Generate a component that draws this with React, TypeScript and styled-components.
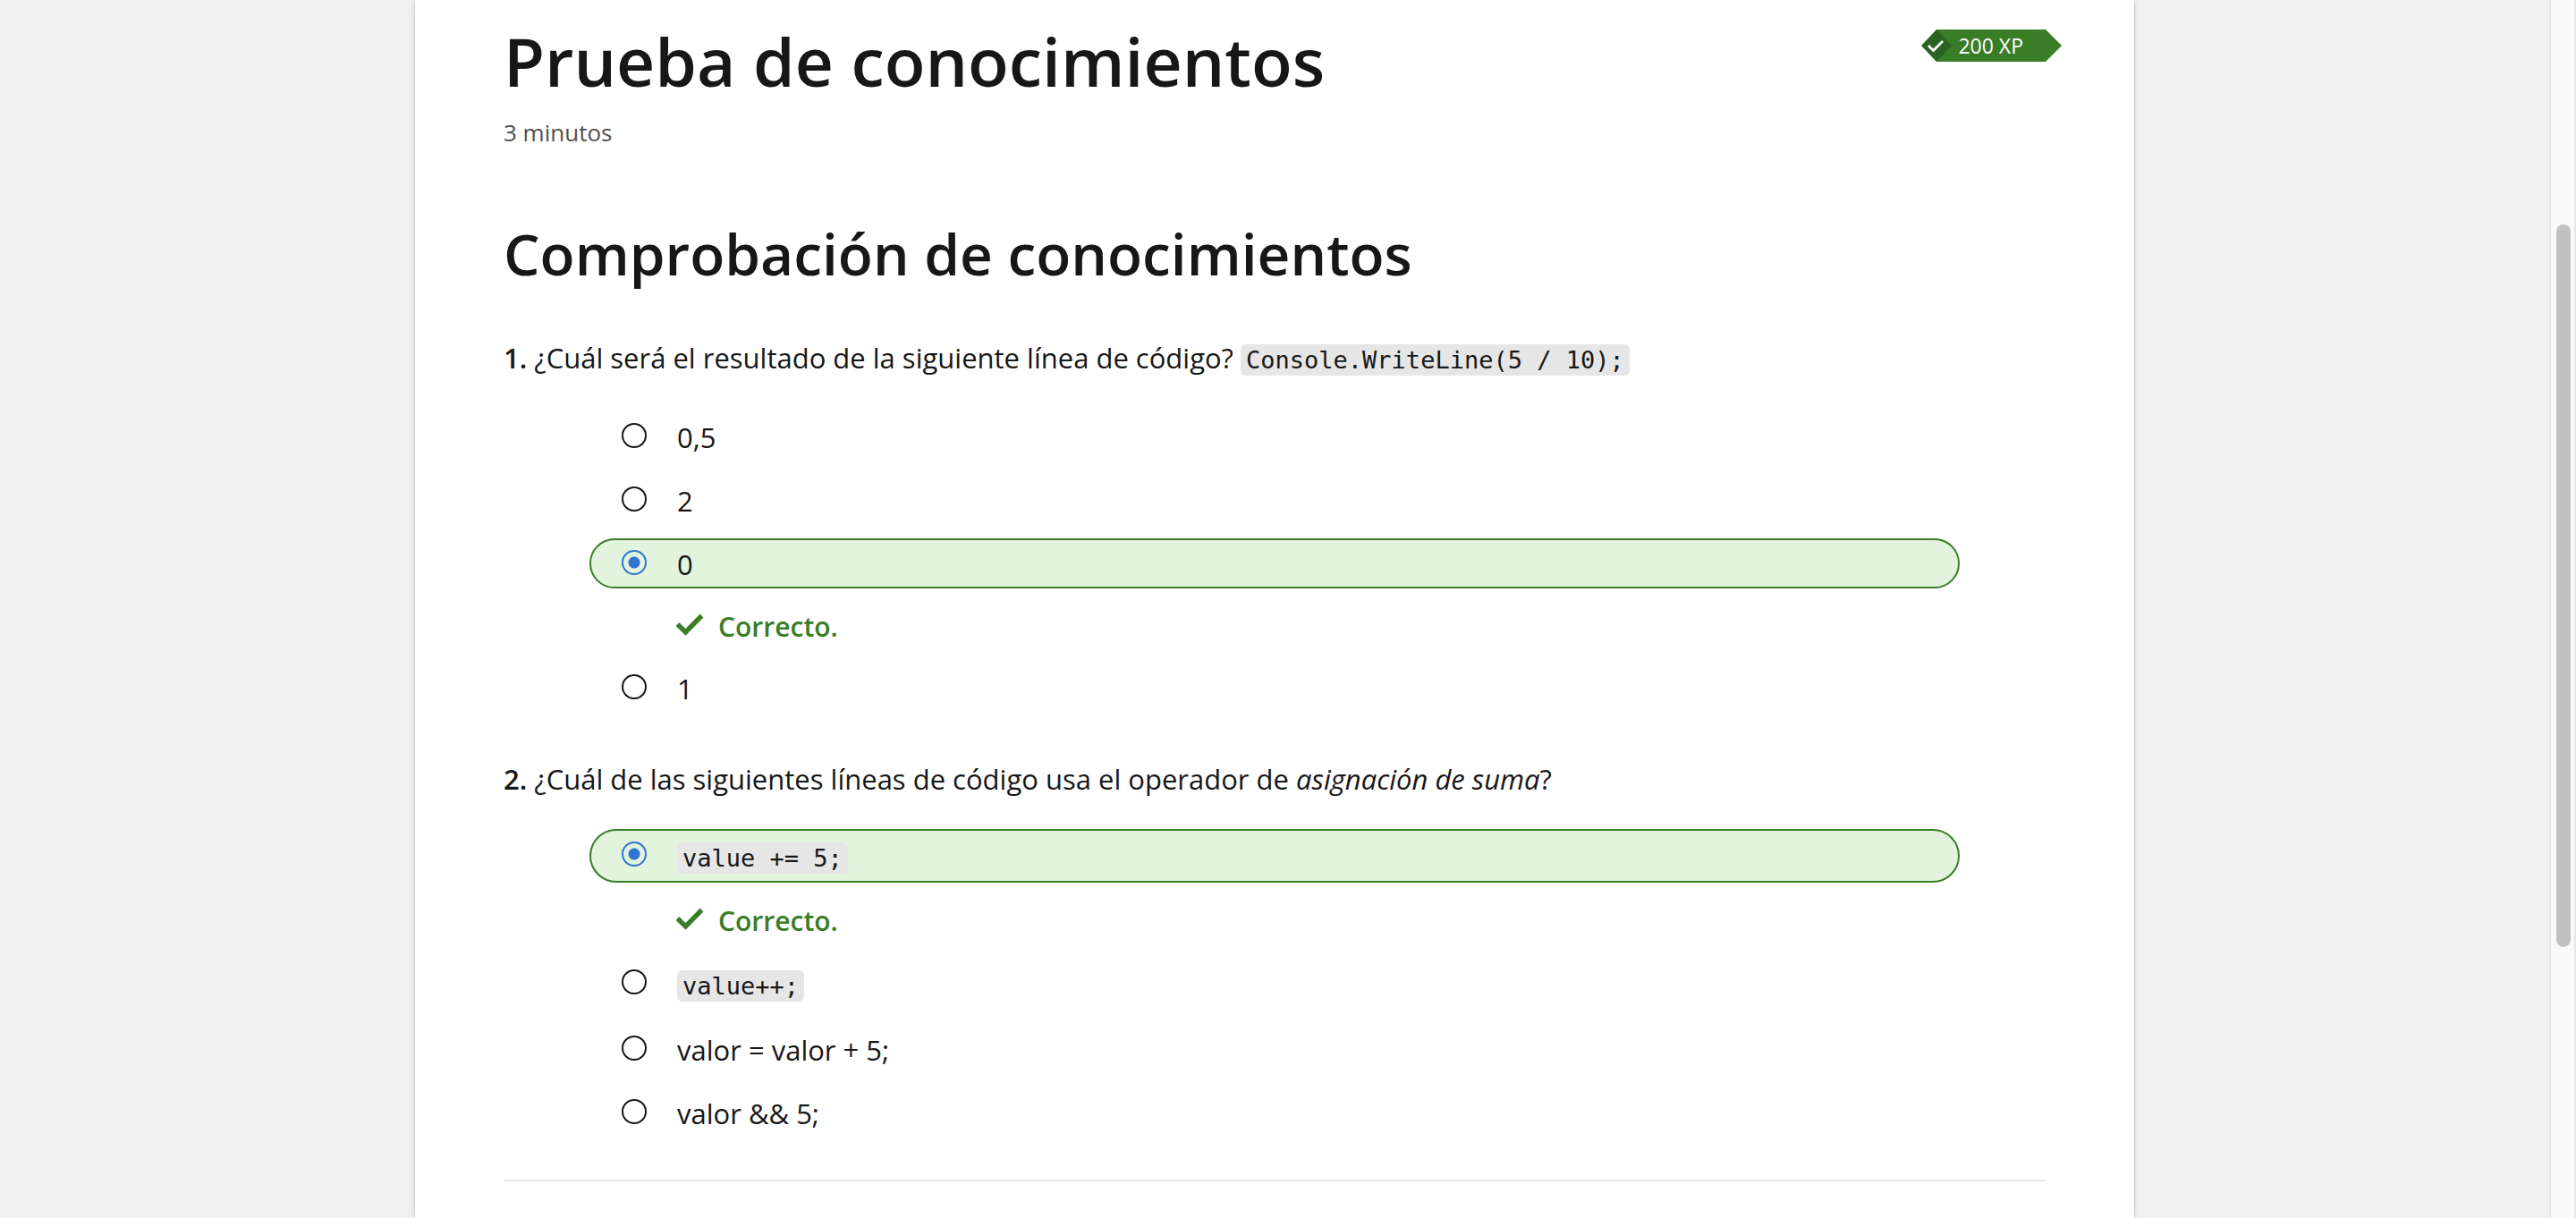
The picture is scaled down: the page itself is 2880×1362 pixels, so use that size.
import React, { useState } from "react";
import styled, { createGlobalStyle } from "styled-components";

const GlobalStyle = createGlobalStyle`
  * { box-sizing: border-box; }
  body {
    margin: 0;
    background: #f1f1f1;
    color: #171717;
    font-family: "Open Sans", "Noto Sans", sans-serif;
    font-size: 31px;
    line-height: 48px;
  }
`;

const Viewport = styled.div`
  display: flex;
  height: 100vh;
  overflow: hidden;
`;

const Content = styled.main`
  flex: 1;
  display: flex;
  justify-content: center;
  align-items: stretch;
`;

const Card = styled.article`
  width: 100%;
  max-width: 1922px;
  padding: 14px 99px 40px;
  background: #fff;
  box-shadow: 0 0 2px rgba(0, 0, 0, 0.22), 0 2px 8px rgba(0, 0, 0, 0.13);
`;

const Header = styled.header`
  display: flex;
  justify-content: space-between;
  align-items: flex-start;
`;

const Title = styled.h1`
  margin: 0;
  font-size: 75px;
  font-weight: 600;
  line-height: 108px;
`;

const Badge = styled.span`
  position: relative;
  display: flex;
  align-items: center;
  height: 36px;
  margin-top: 19px;
  padding: 0 25px 0 24px;
  background: #3a7d27;
  color: #fff;
  font-size: 23px;
  line-height: 36px;

  &::after {
    content: "";
    position: absolute;
    left: 100%;
    top: 0;
    width: 18px;
    height: 36px;
    background: #3a7d27;
    clip-path: polygon(0 0, 100% 50%, 0 100%);
  }
`;

const BadgeMark = styled.svg`
  position: absolute;
  left: -17px;
  top: 0;
  width: 34px;
  height: 36px;
`;

const Duration = styled.p`
  margin: 6px 0 0;
  color: #505050;
  font-size: 26px;
  line-height: 40px;
`;

const Heading = styled.h2`
  margin: 68px 0 0;
  font-size: 64px;
  font-weight: 600;
  line-height: 96px;
`;

const Question = styled.fieldset`
  min-width: 0;
  margin: 0;
  padding: 0;
  border: 0;
`;

const Prompt = styled.legend<{ $spaced?: boolean }>`
  padding: ${(p) => (p.$spaced ? "50px 0 32px" : "44px 0 36px")};
`;

const Number = styled.strong`
  font-weight: 600;
`;

const Code = styled.code`
  padding: 2px 6px;
  border-radius: 6px;
  background: #e6e6e6;
  font-family: "DejaVu Sans Mono", monospace;
  font-size: 27px;
  line-height: 32px;
`;

const Options = styled.div`
  display: flex;
  flex-direction: column;
  gap: 15px;
  margin: 0 96px;
`;

const Option = styled.label<{ $correct: boolean; $tall: boolean }>`
  display: flex;
  align-items: center;
  gap: 34px;
  height: ${(p) => (p.$tall ? "60px" : "56px")};
  padding: ${(p) => (p.$tall ? "0 34px 2px" : "0 34px")};
  border: 2px solid ${(p) => (p.$correct ? "#3a7d27" : "transparent")};
  border-radius: 30px;
  background: ${(p) => (p.$correct ? "#e2f4de" : "transparent")};
`;

const OptionText = styled.span`
  padding-top: 2px;
`;

const Radio = styled.input`
  appearance: none;
  flex: none;
  width: 28px;
  height: 28px;
  margin: 0 0 2px;
  border: 2px solid #171717;
  border-radius: 50%;

  &:checked {
    border-color: #3174d1;
    background: radial-gradient(circle, #3174d1 6px, transparent 7px);
  }
`;

const Feedback = styled.p`
  display: flex;
  align-items: center;
  gap: 16px;
  height: 53px;
  margin: 0;
  padding: 2px 0 0 96px;
  color: #3a7d27;
  font-size: 30px;
  font-weight: 600;
`;

const Tick = styled.svg`
  width: 32px;
  height: 26px;
  margin-bottom: 4px;
`;

const Divider = styled.hr`
  height: 2px;
  margin: 47px 0 0;
  border: 0;
  background: #e6e6e6;
`;

const Scrollbar = styled.div`
  flex: none;
  display: grid;
  grid-template-rows: 251fr 808fr 303fr;
  width: 30px;
  padding: 0 4px 0 6px;
  border: solid #e8e8e8;
  border-width: 0 2px;
  background: #fafafa;
`;

const Thumb = styled.div`
  grid-row: 2;
  border-radius: 8px;
  background: #c1c1c1;
`;

type Choice = { text: string; code?: boolean; correct?: boolean };

const first: Choice[] = [
  { text: "0,5" },
  { text: "2" },
  { text: "0", correct: true },
  { text: "1" },
];

const second: Choice[] = [
  { text: "value += 5;", code: true, correct: true },
  { text: "value++;", code: true },
  { text: "valor = valor + 5;" },
  { text: "valor && 5;" },
];

function Choices({ name, items }: { name: string; items: Choice[] }) {
  const [picked, setPicked] = useState(items.findIndex((i) => i.correct));
  return (
    <Options>
      {items.map((item, i) => {
        const correct = picked === i && !!item.correct;
        return (
          <React.Fragment key={item.text}>
            <Option $correct={correct} $tall={!!item.code}>
              <Radio
                type="radio"
                name={name}
                checked={picked === i}
                onChange={() => setPicked(i)}
              />
              <OptionText>
                {item.code ? <Code>{item.text}</Code> : item.text}
              </OptionText>
            </Option>
            {correct && (
              <Feedback>
                <Tick viewBox="0 0 32 26" aria-hidden="true">
                  <path d="M2.5 12 11.5 21 29.5 2.5" fill="none" stroke="currentColor" strokeWidth="5.4" />
                </Tick>
                Correcto.
              </Feedback>
            )}
          </React.Fragment>
        );
      })}
    </Options>
  );
}

export default function App() {
  return (
    <>
      <GlobalStyle />
      <Viewport>
        <Content>
          <Card>
            <Header>
              <Title>Prueba de conocimientos</Title>
              <Badge>
                <BadgeMark viewBox="0 0 34 36" aria-hidden="true">
                  <path d="M0 18 17 0 34 18 17 36Z" fill="#2b6322" />
                  <path d="M8 18 13.5 23.5 24 13" fill="none" stroke="#fff" strokeWidth="2.8" />
                </BadgeMark>
                200 XP
              </Badge>
            </Header>
            <Duration>3 minutos</Duration>
            <Heading>Comprobación de conocimientos</Heading>
            <Question>
              <Prompt>
                <Number>1.</Number> ¿Cuál será el resultado de la siguiente línea de código?{" "}
                <Code>Console.WriteLine(5 / 10);</Code>
              </Prompt>
              <Choices name="q1" items={first} />
            </Question>
            <Question>
              <Prompt $spaced>
                <Number>2.</Number> ¿Cuál de las siguientes líneas de código usa el operador de{" "}
                <em>asignación de suma</em>?
              </Prompt>
              <Choices name="q2" items={second} />
            </Question>
            <Divider />
          </Card>
        </Content>
        <Scrollbar aria-hidden="true">
          <Thumb />
        </Scrollbar>
      </Viewport>
    </>
  );
}
